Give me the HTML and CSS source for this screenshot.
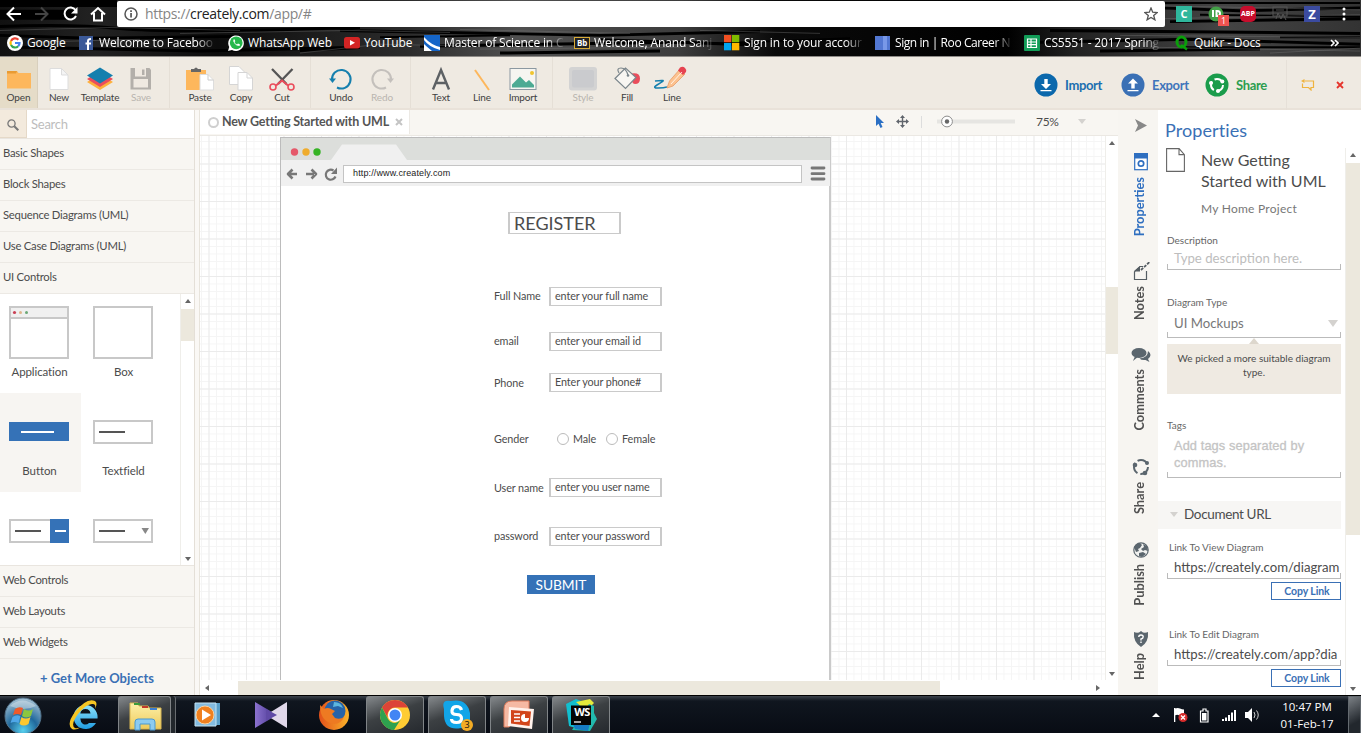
FILE: index.html
```html
<!DOCTYPE html>
<html lang="en">
<head>
<meta charset="utf-8">
<title>Creately</title>
<link rel="stylesheet" href="styles.css">
</head>
<body>
<div class="screen">
  <header class="chrome">
    <svg class="texture" width="1361" height="57" viewBox="0 0 1361 57" preserveAspectRatio="none">
      <defs>
        <linearGradient id="tx"><stop offset="0" stop-color="#111"/><stop offset=".07" stop-color="#222"/><stop offset=".16" stop-color="#0c0c0c"/><stop offset=".3" stop-color="#2c2c2c"/><stop offset=".38" stop-color="#505050"/><stop offset=".5" stop-color="#3c3c3c"/><stop offset=".57" stop-color="#0a0a0a"/><stop offset=".74" stop-color="#000"/><stop offset=".79" stop-color="#222"/><stop offset=".9" stop-color="#444"/><stop offset="1" stop-color="#333"/></linearGradient>
      </defs>
      <rect width="1361" height="57" fill="url(#tx)"/>
      <g fill="none" stroke="#000">
        <path stroke-width="10" d="M0 2H117M0 15h75"/>
        <path stroke-width="3" d="M0 27q70-3 120 2t240-1M0 36l90 3 150-2M20 48l180 4 160-4M340 31l260 5 160-4M420 47l260-4 80 3M500 54l160-2M1160 8l80 3 120-3M1170 22l190-3M1050 31l310 3M1040 43l150-3 170 5M1100 52l160-2"/>
        <path stroke-width="2" d="M600 40l120 4 130-5M300 52l60-3M1200 15l160 2M1160 3h200M1280 38h80M1180 48h180M380 38l130-2"/>
      </g>
      <g fill="none" stroke="#777" opacity=".4">
        <path d="M0 31l110-3 130 3M30 43l110-3M180 34l170-3 100 2M300 54l80-9 90 2M460 30l170 4M480 50l200-2M700 31l120 3M1165 6l195 4M1165 19l195-4M1120 36l240 2M1150 48l210 4M1270 54l90-5"/>
      </g>
    </svg>
    <div class="addressbar">
      <div class="nav">
        <svg width="117" height="28" viewBox="0 0 117 28" fill="none" stroke-width="2">
          <path stroke="#fff" d="M21 14H8M14 7.500L7.500 14l6.500 6.500"/>
          <path stroke="#444" d="M35 14h12M41 7.500l6.500 6.500-6.500 6.500"/>
          <path stroke="#fff" d="M75.500 10a6 6 0 1 0 .5 6"/><path fill="#fff" d="M71 13.500h6.500V7z"/>
          <path stroke="#fff" d="M91 14.500l7-6.500 7 6.500M94 13v7.500h8V13"/>
        </svg>
      </div>
      <div class="omnibox">
        <svg width="14" height="14" viewBox="0 0 14 14"><circle cx="7" cy="7" r="6" fill="none" stroke="#555" stroke-width="1.500"/><path d="M6.200 6h1.700v4.500H6.200zM6.200 3.300h1.700v1.600H6.200z" fill="#555"/></svg>
        <span class="url">https://<b>creately.com</b>/app/#</span>
        <svg class="star" width="14" height="14" viewBox="0 0 14 14"><path d="M7 1l1.700 4.200 4.500.3-3.500 2.900 1.200 4.400L7 10.400l-3.900 2.400 1.200-4.400L.8 5.500l4.500-.3z" fill="none" stroke="#555" stroke-width="1.300"/></svg>
      </div>
      <div class="exts">
        <span class="ext ext-c">C</span>
        <span class="ext ext-d"><svg width="16" height="16" viewBox="0 0 16 16"><circle cx="8" cy="8" r="7.500" fill="#43a047"/><path d="M5 4v7M8.500 5v5h1a2.500 2.500 0 0 0 0-5z" stroke="#fff" stroke-width="2" fill="none"/></svg><i class="badge">1</i></span>
        <span class="ext ext-abp">ABP</span>
        <svg width="18" height="16" viewBox="0 0 18 16" fill="none" stroke="#555"><rect x="1" y="1" width="14" height="9"/><path d="M4 13l2-6 3 6 2-5 3 6M4 4h8"/></svg>
        <span class="ext ext-z">Z</span>
        <svg width="4" height="14" viewBox="0 0 4 14" fill="#fff"><circle cx="2" cy="2" r="1.500"/><circle cx="2" cy="7" r="1.500"/><circle cx="2" cy="12" r="1.500"/></svg>
      </div>
    </div>
    <nav class="bookmarks">
      <a class="bm w72"><svg width="16" height="16" viewBox="0 0 16 16"><circle cx="8" cy="8" r="8" fill="#fff"/><g fill="none" stroke-width="2.200"><path stroke="#ea4335" d="M4 6a4.600 4.600 0 0 1 7.400-1.300"/><path stroke="#fbbc05" d="M4 10a4.600 4.600 0 0 1 0-4"/><path stroke="#34a853" d="M11.200 11.300A4.600 4.600 0 0 1 4 10"/><path stroke="#4285f4" d="M8 8h4.500a4.600 4.600 0 0 1-1.300 3.300"/></g></svg><span>Google</span></a>
      <a class="bm w149"><svg width="16" height="16" viewBox="0 0 16 16"><rect x="0" y="1" width="14" height="14" fill="#3b5998"/><path d="M9 15V6q0-2 3-2M6.500 8.500H12" stroke="#fff" stroke-width="2" fill="none"/></svg><span class="fade">Welcome to Faceboo</span></a>
      <a class="bm w116"><svg width="16" height="16" viewBox="0 0 16 16"><path d="M0 16l1.200-4A7.800 7.800 0 1 1 4 14.900z" fill="#fff"/><circle cx="8.200" cy="7.800" r="6.400" fill="#25b84b"/><path d="M5.500 4.500q-1 1.500 1 4t5 2.500l.5-1.500-2-1-1 1q-2-1-2.500-2.500l.8-.8L6.500 4.300z" fill="#fff"/></svg><span>WhatsApp Web</span></a>
      <a class="bm w80"><svg width="16" height="16" viewBox="0 0 16 16"><rect x="0" y="2" width="16" height="11.500" rx="2.500" fill="#d32424"/><path d="M6 5l5 2.700-5 2.800z" fill="#fff"/></svg><span>YouTube</span></a>
      <a class="bm w150"><svg width="16" height="16" viewBox="0 0 16 16"><rect width="16" height="16" fill="#fff"/><path fill="#1565c8" d="M0 0h16v12Q7 10 0 2zM0 5q5 7 16 10v1H8Q3 12 0 9z"/></svg><span class="fade">Master of Science in C</span></a>
      <a class="bm w150"><i class="bb">Bb</i><span class="fade">Welcome, Anand Sanj</span></a>
      <a class="bm w151"><svg width="16" height="16" viewBox="0 0 16 16"><path fill="#f25022" d="M0 0h7.300v7.300H0z"/><path fill="#7fba00" d="M8 0h7.300v7.300H8z"/><path fill="#00a4ef" d="M0 8h7.300v7.300H0z"/><path fill="#ffb900" d="M8 8h7.300v7.300H8z"/></svg><span class="fade">Sign in to your accour</span></a>
      <a class="bm w149"><svg width="16" height="16" viewBox="0 0 16 16"><rect y="1" width="15" height="14" fill="#5277d2"/><path d="M8 1h4v14H8z" fill="#7898e8"/></svg><span class="fade tight">Sign in | Roo Career N</span></a>
      <a class="bm w150"><svg width="16" height="16" viewBox="0 0 16 16"><rect width="16" height="16" rx="1" fill="#129d58"/><path d="M3.500 4h9v8.500h-9zM3.500 7h9M3.500 9.700h9M7 4v8.500" fill="none" stroke="#fff" stroke-width="1.200"/></svg><span class="fade">CS5551 - 2017 Spring</span></a>
      <a class="bm w150"><svg width="16" height="16" viewBox="0 0 16 16" fill="none" stroke="#0a9e0a"><ellipse cx="7.500" cy="7" rx="4.500" ry="5" stroke-width="3"/><path d="M7 10l6 4.500" stroke-width="2.500"/></svg><span>Quikr - Docs</span></a>
      <svg class="more" width="9" height="8" viewBox="0 0 9 8" fill="none" stroke="#fff" stroke-width="1.600"><path d="M1 1l3 3-3 3M5 1l3 3-3 3"/></svg>
    </nav>
  </header>

  <div class="toolbar">
    <div class="tool open"><svg width="24" height="26" viewBox="0 0 24 26"><path d="M0 5h10l1.500 2H24v15.500H0z" fill="#fdb75c"/><path d="M0 5h10l-1 2.500H0z" fill="#e99b33"/></svg><span>Open</span></div>
    <div class="tool"><svg width="24" height="26" viewBox="0 0 24 26"><path d="M3 2.500h11.500l6.500 6.500v14.500H3z" fill="#fff" stroke="#ddd"/><path d="M14.500 2.500V9H21z" fill="#f4f4f4" stroke="#ddd"/></svg><span>New</span></div>
    <div class="tool"><svg width="26" height="26" viewBox="0 0 26 26"><path d="M0 16l13 8 13-8-13-8z" fill="#fdb13c"/><path d="M0 13l13 8 13-8-13-8z" fill="#ea4d5c"/><path d="M0 9.500l13 8 13-8L13 1.500z" fill="#147fae"/></svg><span>Template</span></div>
    <div class="tool off"><svg width="24" height="26" viewBox="0 0 24 26"><path d="M1.500 2h19L22 4v19.500H1.500z" fill="#b3afaa"/><path d="M6 2h11v8.500H6zM4.500 13h14.500v8.500H4.500z" fill="#efe9e1"/><path d="M13 3.500h2.500v5.500H13z" fill="#b3afaa"/></svg><span>Save</span></div>
    <i class="sep"></i>
    <div class="tool"><svg width="28" height="26" viewBox="0 0 28 26"><path d="M0 4h20v20H0z" fill="#fdb75c"/><path d="M5 6V3h3q2-3 4 0h3v3z" fill="#666"/><path d="M14 8.500h8l5.500 5.500v10H14z" fill="#fff" stroke="#ddd"/><path d="M22 8.500V14h5.500" fill="none" stroke="#ccc"/></svg><span>Paste</span></div>
    <div class="tool"><svg width="24" height="26" viewBox="0 0 24 26" fill="#fff" stroke="#d5d5d5"><path d="M.5.500H10l5 5v13H.5z"/><path d="M9 6.500h9l5.500 5.500v12H9z"/><path fill="none" d="M18 6.500V12h5.500"/></svg><span>Copy</span></div>
    <div class="tool"><svg width="26" height="26" viewBox="0 0 26 26" fill="none"><path d="M3 3l14.500 15M23.500 3L9 18" stroke="#555" stroke-width="2.300"/><path d="M7 19.500l6-5 6 5" stroke="#ea4d5c" stroke-width="2"/><circle cx="4" cy="21" r="3" stroke="#ea4d5c" stroke-width="1.600"/><circle cx="22" cy="21" r="3" stroke="#ea4d5c" stroke-width="1.600"/></svg><span>Cut</span></div>
    <i class="sep"></i>
    <div class="tool"><svg width="24" height="26" viewBox="0 0 24 26"><path d="M3 14a9.300 9.300 0 1 1 5 7.500" fill="none" stroke="#147fae" stroke-width="2"/><path d="M0 12.500h7L3.500 17z" fill="#147fae"/></svg><span>Undo</span></div>
    <div class="tool off"><svg width="24" height="26" viewBox="0 0 24 26"><path d="M21 14a9.300 9.300 0 1 0-5 7.500" fill="none" stroke="#c4c0bc" stroke-width="2"/><path d="M24 12.500h-7l3.500 4.500z" fill="#c4c0bc"/></svg><span>Redo</span></div>
    <i class="sep"></i>
    <div class="tool"><svg width="20" height="26" viewBox="0 0 20 26"><path d="M2 23.500L10 4l8 19.500M5 17h10" fill="none" stroke="#5d6164" stroke-width="2.400"/></svg><span>Text</span></div>
    <div class="tool"><svg width="24" height="26" viewBox="0 0 24 26"><path d="M5 4l14 20" stroke="#fdb75c" stroke-width="2"/></svg><span>Line</span></div>
    <div class="tool"><svg width="28" height="26" viewBox="0 0 28 26"><rect x="1" y="2.500" width="26" height="21" fill="#f6f5f1" stroke="#8b98a1"/><path d="M3 21.500v-3l8-8 6 6 3-2.500 5 5v2.500z" fill="#4caa93"/><circle cx="23" cy="7" r="2" fill="#f0c52e"/></svg><span>Import</span></div>
    <i class="sep wide"></i>
    <div class="tool off"><svg width="28" height="26" viewBox="0 0 28 26"><rect x="0" y="1" width="28" height="23.500" rx="3" fill="#d3d3d3"/><rect x="3" y="4" width="22" height="17.500" rx="2" fill="#cacbce"/></svg><span>Style</span></div>
    <div class="tool w45"><svg width="28" height="26" viewBox="0 0 28 26"><path d="M19 7.500q8-1 8 5 0 5.500-5 5.500-4-1-2-4z" fill="#ea4d5c"/><path d="M2 12.500L12.500 2 23 11.500 12.500 22.500z" fill="#f8f6f2" stroke="#7b868c" stroke-width="1.200"/><path d="M6 7q-3-5 2-5t7 7" fill="none" stroke="#7b868c" stroke-width="1.200"/><circle cx="15" cy="9.500" r="1.300" fill="#7b868c"/></svg><span>Fill</span></div>
    <div class="tool w45 pen"><svg width="34" height="26" viewBox="0 0 34 26"><path d="M1 15q9-1 8 0t-6 4 1 3 9-1" fill="none" stroke="#147fae" stroke-width="1.700"/><path d="M13 22l2.500-7L26 3l5 5-12 12z" fill="#fcc28f" stroke="#e79b67" stroke-width=".8"/><path d="M24 4.500l2-3q3-1.500 5 .5t1 4l-3 3z" fill="#e64350"/><path d="M17 18L28 6" stroke="#fff" stroke-width=".8"/></svg><span>Line</span></div>
    <div class="actions">
      <div class="action imp"><svg width="24" height="24" viewBox="0 0 24 24"><circle cx="12" cy="12" r="11.500" fill="#0b68ac"/><path d="M10.300 6h3.400v5h3.300l-5 5-5-5h3.300zM6.500 17h11v1.300h-11z" fill="#fff"/></svg><span>Import</span></div>
      <div class="action exp"><svg width="24" height="24" viewBox="0 0 24 24"><circle cx="12" cy="12" r="11.500" fill="#3a70b5"/><path d="M10.300 15.500h3.400v-5H17l-5-5-5 5h3.300zM6.500 17h11v1.300h-11z" fill="#fff"/></svg><span>Export</span></div>
      <div class="action shr"><svg width="24" height="24" viewBox="0 0 24 24"><circle cx="12" cy="12" r="11.500" fill="#1a9c4b"/><circle cx="12" cy="12" r="6" fill="none" stroke="#fff" stroke-width="2" stroke-dasharray="9.500 3"/><circle cx="17.300" cy="8.500" r="2" fill="#fff"/><circle cx="6" cy="10" r="2" fill="#fff"/><circle cx="13" cy="18" r="2" fill="#fff"/></svg><span>Share</span></div>
      <svg class="chat" width="14" height="12" viewBox="0 0 14 12"><path d="M3.500 2h9v6.500H10v2.500L7.500 8.500h-6V4.500" fill="none" stroke="#efb33e" stroke-width="1.200"/><path d="M0 2l3.500-2v4z" fill="#efb33e"/></svg>
      <svg class="x" width="8" height="8" viewBox="0 0 8 8"><path d="M1 1l6 6M7 1L1 7" stroke="#e5342c" stroke-width="1.800"/></svg>
    </div>
  </div>

  <main class="work">
    <aside class="left">
      <div class="search"><i><svg width="12" height="12" viewBox="0 0 12 12" fill="none" stroke="#777"><circle cx="4.500" cy="4.500" r="3.600" stroke-width="1.300"/><path d="M7.300 7.300l4 4" stroke-width="2"/></svg></i><span>Search</span></div>
      <div class="cat">Basic Shapes</div>
      <div class="cat">Block Shapes</div>
      <div class="cat">Sequence Diagrams (UML)</div>
      <div class="cat">Use Case Diagrams (UML)</div>
      <div class="cat">UI Controls</div>
      <div class="shapes">
        <div class="grid">
          <div class="cell"><svg width="60" height="53" viewBox="0 0 60 53"><rect x="1" y="1" width="58" height="51" fill="#fff" stroke="#c8c8c8" stroke-width="2"/><path d="M2 2h56v9H2z" fill="#f0f0f0"/><path d="M1 12h58" stroke="#c8c8c8" stroke-width="2"/><circle cx="5.500" cy="6.500" r="1.600" fill="#c94055"/><circle cx="11.500" cy="6.500" r="1.500" fill="#deb58a"/><circle cx="17.500" cy="6.500" r="1.500" fill="#6ba876"/></svg><span>Application</span></div>
          <div class="cell"><svg width="60" height="53" viewBox="0 0 60 53"><rect x="1" y="1" width="58" height="51" fill="#fff" stroke="#c8c8c8" stroke-width="2"/></svg><span>Box</span></div>
          <div class="cell hot"><svg width="60" height="53" viewBox="0 0 60 53"><path d="M0 17h60v19H0z" fill="#3572b7"/><path d="M12 27h33" stroke="#fff" stroke-width="2"/></svg><span>Button</span></div>
          <div class="cell"><svg width="60" height="53" viewBox="0 0 60 53"><rect x="1" y="16" width="58" height="22" fill="#fff" stroke="#c8c8c8" stroke-width="2"/><path d="M6 27h26" stroke="#555" stroke-width="2"/></svg><span>Textfield</span></div>
          <div class="cell"><svg width="60" height="53" viewBox="0 0 60 53"><rect x="1" y="16" width="58" height="22" fill="#fff" stroke="#c8c8c8" stroke-width="2"/><path d="M6 27h26" stroke="#555" stroke-width="2"/><path d="M41 15h19v24H41z" fill="#3572b7"/><path d="M46 27h11" stroke="#fff" stroke-width="2"/></svg></div>
          <div class="cell"><svg width="60" height="53" viewBox="0 0 60 53"><rect x="1" y="16" width="58" height="22" fill="#fff" stroke="#c8c8c8" stroke-width="2"/><path d="M6 27h26" stroke="#555" stroke-width="2"/><path d="M48.500 24h7.500l-3.700 6z" fill="#888"/></svg></div>
        </div>
        <div class="vbar"><i class="up"></i><b></b><i class="down"></i></div>
      </div>
      <div class="cat">Web Controls</div>
      <div class="cat">Web Layouts</div>
      <div class="cat">Web Widgets</div>
      <div class="getmore">+ Get More Objects</div>
    </aside>

    <section class="center">
      <div class="tabbar">
        <div class="doc"><i class="ring"></i><span>New Getting Started with UML</span><svg width="8" height="8" viewBox="0 0 8 8"><path d="M1 1l6 6M7 1L1 7" stroke="#c4c4c4" stroke-width="2"/></svg></div>
        <div class="zoombar">
          <svg width="8" height="13" viewBox="0 0 8 13"><path d="M0 0v11l2.500-2.300L4.500 13l2-1-1.800-4H8z" fill="#2a6fc4"/></svg>
          <svg width="13" height="13" viewBox="0 0 13 13"><path d="M6.500 2v9M2 6.500h9" stroke="#60656c" stroke-width="1.400"/><path d="M6.500 0L9 3H4zM6.500 13L9 10H4zM0 6.500L3 4v5zM13 6.500L10 4v5z" fill="#60656c"/></svg>
          <i class="vline"></i>
          <svg class="slider" width="78" height="13" viewBox="0 0 78 13"><path d="M0 6.500h78" stroke="#e6e5e2" stroke-width="4"/><circle cx="10" cy="6.500" r="5.400" fill="#fff" stroke="#8d8d8d"/><circle cx="10" cy="6.500" r="2.200" fill="#666"/></svg>
          <span class="pct">75%</span>
          <i class="caret"></i>
        </div>
      </div>
      <div class="stage">
        <div class="canvas">
          <div class="mock">
            <svg class="mocktop" width="549" height="48" viewBox="0 0 549 48"><path fill="#dcdedb" d="M0 0h549v22H0z"/><path fill="#f0f0f0" d="M0 22h50L61 6.500h54L126 22h423v26H0z"/><circle cx="13.500" cy="14" r="3.700" fill="#e5596a"/><circle cx="25" cy="14" r="3.700" fill="#efac2d"/><circle cx="36" cy="14" r="3.700" fill="#35b324"/>
              <g fill="none" stroke="#777" stroke-width="2.600" stroke-linejoin="round"><path d="M16 36H8M11.500 31.500L7 36l4.500 4.500M25 36h8M30.500 31.500L35 36l-4.500 4.500"/><path d="M52.500 32.500a5 5 0 1 0 2 6" stroke-width="2.200"/></g><path d="M56 29.500v6.500h-6z" fill="#777"/>
              <rect x="62.500" y="27.500" width="458" height="17" fill="#fff" stroke="#c4c4c4"/><path d="M531 30h12M531 35.700h12M531 41h12" stroke="#777" stroke-width="2.800" stroke-linecap="round"/></svg>
            <span class="mockurl">http://www.creately.com</span>
            <div class="obj box title" style="left:227px;top:74px">REGISTER</div>
            <div class="obj label" style="left:213px;top:149px">Full Name</div>
            <div class="obj box" style="left:268px;top:149px">enter your full name</div>
            <div class="obj label" style="left:213px;top:194px">email</div>
            <div class="obj box" style="left:268px;top:194px">enter your email id</div>
            <div class="obj label" style="left:213px;top:236px">Phone</div>
            <div class="obj box" style="left:268px;top:235px">Enter your phone#</div>
            <div class="obj label" style="left:213px;top:292px">Gender</div>
            <div class="obj label" style="left:276px;top:292px"><i class="radio"></i>Male</div>
            <div class="obj label" style="left:325px;top:292px"><i class="radio"></i>Female</div>
            <div class="obj label" style="left:213px;top:341px">User name</div>
            <div class="obj box" style="left:268px;top:340px">enter you user name</div>
            <div class="obj label" style="left:213px;top:389px">password</div>
            <div class="obj box" style="left:268px;top:389px">enter your password</div>
            <div class="obj submit" style="left:246px;top:437px">SUBMIT</div>
          </div>
        </div>
        <div class="vbar tall"><i class="up"></i><b></b><i class="down"></i></div>
      </div>
      <div class="hbar"><i class="lft"></i><b></b><i class="rgt"></i></div>
    </section>

    <nav class="tabs">
      <svg class="collapse" width="12" height="13" viewBox="0 0 12 13"><path d="M0 0l12 6.500L0 13l3-6.500z" fill="#888"/></svg>
      <div class="tab t1"><svg width="14" height="18" viewBox="0 0 14 18"><rect x=".7" y=".7" width="12.600" height="16" fill="#fff" stroke="#2f6fc0" stroke-width="1.200"/><path d="M0 0h14v5.500H0z" fill="#2f6fc0"/><circle cx="7" cy="10.500" r="2.700" fill="none" stroke="#2f6fc0" stroke-width="1.700"/></svg><span>Properties</span></div>
      <div class="tab t2"><svg width="18" height="18" viewBox="0 0 18 18"><path d="M2.500 9.500v8h12V9M11 4.500H8L2.500 9.500" fill="none" stroke="#555d63" stroke-width="1.200"/><path d="M2 9.500L8 4v5.500z" fill="#555d63"/><path d="M9 8l8.500-8" stroke="#555d63" stroke-width="1.800" stroke-dasharray="3 1.200"/></svg><span>Notes</span></div>
      <div class="tab t3"><svg width="20" height="16" viewBox="0 0 20 16" fill="#5b666e"><ellipse cx="8" cy="6" rx="7.500" ry="5"/><path d="M2 14l2-5h4z"/><path d="M17 4q5 4 0 8l1.500 3-4-2q-4 .5-6-1.500Q17 11 17 4z"/></svg><span>Comments</span></div>
      <div class="tab t4"><svg width="18" height="18" viewBox="0 0 18 18"><circle cx="9" cy="9" r="7" fill="none" stroke="#5b666e" stroke-width="2" stroke-dasharray="11.600 3"/><circle cx="3" cy="7" r="2.300" fill="#5b666e"/><circle cx="15" cy="5" r="2" fill="#5b666e"/><circle cx="13" cy="15" r="2.300" fill="#5b666e"/></svg><span>Share</span></div>
      <div class="tab t5"><svg width="16" height="16" viewBox="0 0 16 16"><circle cx="8" cy="8" r="7.200" fill="#f1f1ef" stroke="#5b666e" stroke-width="1.200"/><path d="M1 5q3-4 6-4l2 2-2 3-2 1 1 2-3 1zM10 2l4 2 1 5-3-1-2 1-2-2 3-2zM6 11l4-1 3 2-4 3-3-1z" fill="#5b666e"/></svg><span>Publish</span></div>
      <div class="tab t6"><svg width="16" height="16" viewBox="0 0 16 16"><path d="M8 0l2 1.500q3 .5 5-.5Q16 11 8 16 0 11 1 1q2 1 5 .5z" fill="#5b666e"/><path d="M5.800 6q0-2 2.200-2t2.200 1.800T8 8v1.500M8 10.500V12" fill="none" stroke="#fff" stroke-width="1.400"/></svg><span>Help</span></div>
    </nav>

    <aside class="props">
      <h1>Properties</h1>
      <div class="pbody">
        <div class="pcontent">
          <div class="dochead"><svg width="20" height="25" viewBox="0 0 20 25"><path d="M1.600.6h12.500l5.300 6v16.800H1.600zM14 .6v6h5.400" fill="#fff" stroke="#666" stroke-width="1.100"/></svg><div><h2>New Getting Started with UML</h2><p>My Home Project</p></div></div>
          <div class="flabel l1">Description</div>
          <div class="field ph f1">Type description here.</div>
          <div class="flabel l2">Diagram Type</div>
          <div class="field sel">UI Mockups<i class="caret big"></i></div>
          <div class="hint">We picked a more suitable diagram type.</div>
          <div class="flabel l3">Tags</div>
          <div class="field tags">Add tags separated by commas.</div>
          <div class="sect"><i class="caret"></i>Document URL</div>
          <div class="flabel l4">Link To View Diagram</div>
          <div class="field link"><span>https://creately.com/diagram</span></div>
          <div class="copy">Copy Link</div>
          <div class="flabel l5">Link To Edit Diagram</div>
          <div class="field link"><span>https://creately.com/app?dia</span></div>
          <div class="copy">Copy Link</div>
        </div>
        <div class="vbar right"><i class="up"></i><b></b><i class="down"></i></div>
      </div>
    </aside>
  </main>

  <footer class="taskbar">
    <svg width="0" height="0" class="defs"><defs>
      <radialGradient id="orb" cx=".5" cy=".9" r=".9"><stop offset="0" stop-color="#58d0ee"/><stop offset=".45" stop-color="#20699c"/><stop offset="1" stop-color="#a9c4d6"/></radialGradient>
      <linearGradient id="ie" x2="0" y2="1"><stop offset="0" stop-color="#8fe3fb"/><stop offset="1" stop-color="#1f9be0"/></linearGradient>
      <linearGradient id="fold" x2="0" y2="1"><stop offset="0" stop-color="#fdf0a9"/><stop offset="1" stop-color="#eecb5c"/></linearGradient>
      <linearGradient id="ff" x2="1"><stop offset="0" stop-color="#e2501a"/><stop offset="1" stop-color="#fbb32a"/></linearGradient>
      <linearGradient id="vs"><stop offset="0" stop-color="#8b72cf"/><stop offset="1" stop-color="#42308c"/></linearGradient>
    </defs></svg>
    <div class="task orb"><svg width="40" height="38" viewBox="0 0 40 38"><circle cx="19" cy="20" r="18" fill="url(#orb)" stroke="#54748c"/><path d="M6 10Q18-1 32 10q-12 6-26 0z" fill="#fff" opacity=".35"/><path d="M11 13q4-3 8-1l-2 7q-4-2-8 0z" fill="#ef5a29"/><path d="M20 13q5 3 9 0l-2 7q-5 3-9 0z" fill="#8cc63f"/><path d="M8.500 21q4-3 8-1l-2 7q-4-2-8 0z" fill="#4fa7e8"/><path d="M17.500 21q4 3 9 0l-2 7q-5 3-9 0z" fill="#fdc82f"/></svg></div>
    <div class="task ie"><svg width="32" height="34" viewBox="0 0 32 34"><path d="M29.500 20.500A12 12 0 1 0 28 25h-7q-2.500 2.500-6 1-2.500-1.500-2.700-5.500zM12.300 15.500q.7-4.500 5.200-4.500t5 4.500z" fill="url(#ie)"/><path d="M4 31Q-2 26 7 14 19-1 27 3q3 2 0 8 1-5-2-5Q19 5 10 16 2 27 7 30q3 1 7-2-6 5-10 3z" fill="#f6c623"/></svg></div>
    <div class="task run fold"><svg width="34" height="32" viewBox="0 0 34 32"><path d="M2 4h8l1 3h9l1 2h12v21H2z" fill="url(#fold)" stroke="#d7b653"/><path d="M6 4h6v2H6z" fill="#3c9b3c"/><path d="M14 7h6v2h-6z" fill="#c43b2b"/><path d="M22 9h7v2h-7z" fill="#3d7fd0"/><path d="M7 31v-8q0-3 3-3h14q3 0 3 3v8h-5v-6H12v6z" fill="#8ccbf0" stroke="#4a98cf"/></svg></div>
    <div class="task wmp"><svg width="28" height="28" viewBox="0 0 28 28"><path d="M8 2h18v22H8z" fill="#5a9fc9"/><path d="M1 2h21v23H1z" fill="#83bbe0" stroke="#c6e4f4"/><circle cx="11" cy="14" r="9" fill="#f0801f" stroke="#fbd2a0"/><path d="M8 8.500l9 5.500-9 5.500z" fill="#fff"/></svg></div>
    <div class="task vs"><svg width="34" height="28" viewBox="0 0 34 28"><path d="M1 1l22 13L1 27z" fill="url(#vs)"/><path d="M33 1L12 14l21 13z" fill="#e0d8ea"/><path d="M12 8l11 6-11 6z" fill="#604aa6"/></svg></div>
    <div class="task fx"><svg width="32" height="32" viewBox="0 0 32 32"><circle cx="16" cy="16" r="15" fill="url(#ff)"/><circle cx="17" cy="12" r="10.500" fill="#2763a8"/><path d="M16 3q7 0 9 6l-5-2-5 1z" fill="#5db6de"/><path d="M2 6l4 4q4-2 7 0l4 2-3 3 3 4q5 2 9-1-3 7-10 7Q2 23 2 6z" fill="#ee7a22"/></svg></div>
    <div class="task run"><svg width="32" height="32" viewBox="0 0 32 32"><circle cx="16" cy="16" r="15" fill="#fc3"/><path d="M3 8.500A15 15 0 0 1 29 8.500H16a8 8 0 0 0-7 11z" fill="#dc4437"/><path d="M3 8.500A15 15 0 0 0 15 31l7-11q-3 4-7 4-4-.5-6-4z" fill="#2ea14f"/><circle cx="16" cy="16" r="7" fill="#fff"/><circle cx="16" cy="16" r="5.500" fill="#4285f4"/></svg></div>
    <div class="task run"><svg width="32" height="32" viewBox="0 0 32 32"><path d="M3 10Q0 0 10 2q16-3 19 12 0 4 0 12-3 6-9 3Q4 32 3 17z" fill="#12a5e8"/><path d="M20.500 11q-1-3.500-5-3.500T11 11.500t4.500 4 5 4-5 4-5-3.500" fill="none" stroke="#fff" stroke-width="3.200"/></svg><i class="count">3</i></div>
    <div class="task run"><svg width="34" height="32" viewBox="0 0 34 32"><path d="M2 28V10q0-8 8-8h17v8L7 28z" fill="#f5b9a3" stroke="#db7a5a"/><path d="M7 8l25 2-2 20-24-3z" fill="#fff2ec"/><path d="M9 11l20 1.500L27.500 27 9 24.500z" fill="#d2451a"/><path d="M12 15h6M12 18.500h6M12 22h6" stroke="#fff" stroke-width="1.700"/><circle cx="23" cy="19" r="4" fill="#fff"/><path d="M23 19v-5h5v5z" fill="#d2451a"/></svg></div>
    <div class="task run"><svg width="34" height="34" viewBox="0 0 34 34"><path d="M2 6l10-5 8 3-2 28-13-4z" fill="#11bfcf"/><path d="M12 4l14-3 4 4-8 8z" fill="#e6ea3b"/><path d="M25 6l5 2v7l3 6-7 12-18-1z" fill="#22b9ad"/><path d="M9 26l17-1-2 8-13-2z" fill="#167cc3"/><rect x="7" y="7.500" width="20" height="19.500" fill="#050505"/><path d="M10 24h7" stroke="#fff" stroke-width="1.300"/></svg><i class="ws">WS</i></div>
    <div class="tray">
      <svg width="110" height="18" viewBox="0 0 110 18" fill="#fff"><path d="M0 11l4-4 4 4z"/><path d="M22 2h1.300v14H22zM23 2.500q3-1 5 0t4 1v6q-3 1-5-.2t-4 .2z"/><circle cx="31" cy="11.500" r="4.500" fill="#d52b2b"/><path d="M29 9.500l4 4M33 9.500l-4 4" stroke="#fff" stroke-width="1.300"/><path d="M51 3h3v2h2v11h-7.500V5H51z" fill="none" stroke="#fff" stroke-width="1.200"/><path d="M50 7h4.500v7.500H50z"/><path d="M70 13h2v2h-2zM73 11.500h2V15h-2zM76 9h2v6h-2zM79 6.500h2V15h-2zM82 4h2v11h-2zM93 6h3l4-4v14l-4-4h-3z"/><path d="M102 6q2 3 0 6M104.500 4.500q3.500 4.500 0 9" fill="none" stroke="#ccc"/></svg>
      <div class="clock"><span>10:47 PM</span><span>01-Feb-17</span></div>
      <i class="peek"></i>
    </div>
  </footer>
</div>
</body>
</html>
```
FILE: styles.css
```css
* { box-sizing: border-box; }
body { margin: 0; font-family: Lato, "Liberation Sans", sans-serif; color: #4c4c4c; }
i { font-style: normal; }
h1, h2, p { margin: 0; font-weight: 400; }
svg { display: block; flex: none; }
.screen { width: 1361px; height: 733px; overflow: hidden; display: flex; flex-direction: column; background: #fff; white-space: nowrap; }

/* browser chrome */
.chrome { position: relative; height: 57px; flex: none; background: #111; font-family: "Open Sans", "Noto Sans", sans-serif; border-bottom: 1px solid #8e8b87; }
.texture { position: absolute; left: 0; top: 0; height: 56px; }
.addressbar { position: relative; height: 28px; display: flex; }
.nav { width: 117px; }
.omnibox { margin-top: 1px; width: 1048px; height: 26px; background: #fff; border-radius: 2px; display: flex; align-items: center; padding: 0 7px; }
.url { margin-left: 7px; font-size: 14px; letter-spacing: -.34px; color: #858585; line-height: 26px; }
.url b { font-weight: 400; color: #222; }
.star { margin-left: auto; }
.exts { display: flex; align-items: center; margin-left: 11px; gap: 16px; }
.ext { width: 16px; height: 16px; color: #fff; font-weight: 700; font-size: 11px; line-height: 16px; text-align: center; position: relative; }
.ext-c { background: #2fb79c; }
.ext-z { background: #3b4ba0; font-size: 13px; margin-left: -2px; }
.ext-abp { background: #c70d2c; border-radius: 5px; font-size: 7px; }
.badge { position: absolute; left: 10px; top: 9px; width: 11px; height: 11px; background: #ef5350; color: #fff; font-size: 9px; line-height: 11px; font-weight: 400; }
.exts > svg:last-child { margin-left: 6px; }
.bookmarks { position: relative; height: 29px; display: flex; align-items: center; padding-left: 7px; }
.bm { display: flex; align-items: center; gap: 4px; flex: none; font-size: 12px; letter-spacing: -.15px; color: #fff; }
.bm span { line-height: 18px; }
.fade { -webkit-mask-image: linear-gradient(90deg, #000 86%, rgba(0,0,0,.15)); mask-image: linear-gradient(90deg, #000 86%, rgba(0,0,0,.15)); }
.tight { letter-spacing: -.42px; }
.w72 { width: 72px; } .w80 { width: 80px; } .w116 { width: 116px; } .w149 { width: 149px; } .w150 { width: 150px; } .w151 { width: 151px; }
.bb { width: 16px; height: 12px; border: 1px solid #d8ab36; background: #222; font-size: 8px; font-weight: 700; line-height: 10px; text-align: center; }
.more { margin-left: 6px; }

/* application toolbar */
.toolbar { height: 53px; flex: none; display: flex; background: #efeae2; border-bottom: 2px solid #e9e2d9; }
.tool { width: 41px; display: flex; flex-direction: column; align-items: center; padding-top: 9px; font-size: 10px; letter-spacing: -.15px; color: #404040; position: relative; left: .5px; }
.tool span { line-height: 12px; margin-top: -1px; }
.open { width: 38px; left: 0; background: #e5dcc8; border-right: 1px solid #d8cfbd; }
.off { color: #b9b5af; }
.w45 { width: 45px; margin-left: 1px; }
.pen { margin-left: 0; }
.pen svg { transform: translateX(-1px); }
.sep { width: 18px; border-right: 1px solid #e5dfd6; transform: translateX(-9px); }
.sep.wide { width: 19px; }
.actions { margin-left: auto; display: flex; align-items: center; height: 56px; font-size: 13px; font-weight: 700; letter-spacing: -.35px; }
.action { display: flex; align-items: center; gap: 7px; width: 87px; }
.imp { color: #1b6fb0; } .exp { color: #3f75bb; width: 84px; } .shr { color: #2c9d4f; width: 82px; height: 50px; border-right: 1px solid #e6e0d8; }
.chat { margin-left: 14px; }
.x { margin: 0 17px 0 21px; }

.work { height: 585px; flex: none; display: flex; background: #fff; }

/* shape library */
.left { width: 200px; background: #f8f6f2; border-right: 1px solid #e8e4dc; box-shadow: inset -4px 0 #faf8f5, inset -5px 0 #e4dfd7; padding-right: 5px; font-size: 11.300px; letter-spacing: -.25px; display: flex; flex-direction: column; }
.search { height: 29px; display: flex; background: #fff; border-bottom: 1px solid #e9e5df; font-size: 13px; line-height: 28px; color: #bdbdbd; }
.search i { width: 27px; background: #f3eadd; border-right: 1px solid #e5d9c8; border-bottom: 1px solid #e5d9c8; padding: 9px 7px; margin-right: 4px; }
.cat { height: 31px; padding-left: 3px; line-height: 28px; border-bottom: 1px solid #ece9e4; }
.shapes { height: 272px; display: flex; background: #fff; border-bottom: 1px solid #e9e5df; overflow: hidden; }
.grid { width: 181px; display: grid; grid-template-columns: 81px 84px; grid-auto-rows: 99px; }
.cell { display: flex; flex-direction: column; align-items: center; padding: 12px 3px 0 0; }
.cell:nth-child(even) { padding-right: 0; }
.cell span { margin-top: 5px; line-height: 16px; font-size: 11.500px; letter-spacing: -.1px; margin-left: 1px; }
.hot { background: #f7f5f2; }
.getmore { height: 36px; color: #3a70b5; font-weight: 700; font-size: 13px; letter-spacing: 0; line-height: 38px; text-align: center; }

/* scroll bars */
.vbar { width: 14px; display: flex; flex-direction: column; align-items: center; border: 0 solid #efeeea; border-left-width: 1px; background: #fff; }
.vbar b { display: block; width: 14px; height: 32px; background: #ece8dd; }
.up, .down { border: 3px solid transparent; border-top: 0; border-bottom: 4px solid #666; margin: 5px 0 6px; }
.down { border-top: 4px solid #666; border-bottom: 0; margin: auto 0 4px; }

/* canvas */
.center { width: 918px; display: flex; flex-direction: column; }
.tabbar { height: 26px; background: #f8f6f2; display: flex; border-bottom: 1px solid #ebe8e3; }
.doc { width: 210px; background: #fff; border-right: 1px solid #ece9e4; display: flex; align-items: center; padding: 0 8px; font-size: 12.500px; letter-spacing: -.2px; font-weight: 700; color: #555; height: 24px; }
.doc span { line-height: 16px; margin-top: -1px; }
.doc svg { margin-left: auto; margin-right: -2px; }
.ring { width: 11px; height: 11px; border: 2px solid #cfcfcf; border-radius: 50%; margin-right: 3px; }
.zoombar { margin-left: 466px; display: flex; align-items: center; height: 23px; }
.zoombar > svg:nth-child(2) { margin-left: 12px; }
.vline { width: 1px; height: 12px; background: #ddd; margin: 0 15px 0 12px; }
.pct { font-size: 12px; letter-spacing: -.3px; margin-left: 21px; width: 42px; }
.caret { border: 4px solid transparent; border-top: 5px solid #d4d2cf; border-bottom: 0; }
.stage { height: 544px; display: flex; }
.canvas { width: 905px; position: relative; overflow: hidden; background-color: #fff;
  background-image: linear-gradient(#ebebeb 1px, transparent 1px), linear-gradient(90deg, #ebebeb 1px, transparent 1px), linear-gradient(#f5f5f5 1px, transparent 1px), linear-gradient(90deg, #f5f5f5 1px, transparent 1px);
  background-size: 37.500px 37.500px, 37.500px 37.500px, 7.500px 7.500px, 7.500px 7.500px; background-position: 0 27.500px, 8.500px 0, 0 5px, 1px 0; }
.tall { width: 13px; }
.tall b { margin-top: 136px; height: 67px; width: 13px; }
.mock { position: absolute; left: 80px; top: 1px; width: 551px; height: 560px; border: 1px solid #bcbcbc; border-right-width: 2px; border-right-color: #cacaca; background: #fff; }
.mockurl { position: absolute; left: 72px; top: 28px; width: 100px; font: 9px/14px "Liberation Sans", Arial, sans-serif; letter-spacing: .13px; color: #222; }
.obj { position: absolute; font-size: 10.800px; letter-spacing: -.1px; }
.label { line-height: 17px; display: flex; align-items: center; }
.box { width: 113px; height: 19px; border: 2px solid #cacaca; border-width: 1.500px 2px; line-height: 16px; padding-left: 4px; }
.title { width: 113px; height: 22px; font-size: 18px; line-height: 20px; letter-spacing: 0; }
.radio { width: 12px; height: 12px; border: 1.500px solid #bbb; border-radius: 50%; margin-right: 4px; }
.submit { width: 68px; height: 19px; background: #3572b7; color: #fff; font-size: 13.800px; line-height: 19px; text-align: center; }
.hbar { height: 15px; display: flex; align-items: center; background: #fff; padding: 0 18px 0 5px; }
.hbar b { height: 14px; width: 702px; background: #ece8dd; margin-left: 29px; }
.lft, .rgt { border: 3px solid transparent; border-left: 0; border-right: 4px solid #666; }
.rgt { border-right: 0; border-left: 4px solid #666; margin-left: auto; }

/* side tabs */
.tabs { width: 40px; background: #f7f5f1; display: flex; flex-direction: column; align-items: center; padding: 9px 0 0 5px; overflow: hidden; }
.tab { display: flex; flex-direction: column; align-items: center; flex: none; }
.tab span { writing-mode: vertical-rl; transform: rotate(180deg); font-size: 12.800px; font-weight: 700; line-height: 16px; margin: 6px 3px 0 0; color: #505050; }
.collapse { margin-bottom: 21px; }
.t1 { height: 109px; } .t1 span { color: #2f6fc0; }
.t2 { height: 85px; } .t3 { height: 111px; } .t4 { height: 84px; } .t5 { height: 89px; }

/* properties panel */
.props { width: 203px; background: #fff; padding-left: 7px; }
.props h1 { color: #3a70b5; font-size: 18px; letter-spacing: .1px; line-height: 40px; height: 38px; }
.pbody { display: flex; height: 547px; }
.pcontent { width: 176px; padding-left: 2px; }
.right { width: 14px; margin-left: 4px; }
.right b { height: 372px; }
.right .up { margin: 5px 0 6px; }
.dochead { display: flex; height: 84px; margin-left: -2px; }
.dochead div { margin-left: 16px; }
h2 { font-size: 16px; line-height: 21px; width: 140px; white-space: normal; margin-top: 1px; }
.dochead p { font-size: 12px; letter-spacing: .25px; color: #777; margin-top: 10px; line-height: 16px; }
.flabel { font-size: 10px; line-height: 14px; color: #666; }
.field { width: 174px; height: 22px; padding-left: 7px; font-size: 13.200px; line-height: 20px; position: relative; border-bottom: 1px solid #bbb; }
.field::before { content: ""; position: absolute; left: 0; right: 0; bottom: 0; height: 5px; border: solid #bbb; border-width: 0 1px; }
.f1 { color: #bdbdbd; height: 23px; line-height: 22px; }
.l1 { margin-top: 1px; }
.l2 { margin-top: 25px; }
.sel { height: 29px; line-height: 29px; color: #777; display: flex; align-items: center; justify-content: space-between; }
.big { border-width: 7px 5px 0; margin: 0 3px; }
.hint { position: relative; margin-top: 6px; height: 50px; background: #efeae2; font-size: 10px; line-height: 14px; padding: 7px 8px; text-align: center; white-space: normal; width: 174px; }
.hint::before { content: ""; position: absolute; left: 82px; top: -6px; border: 5px solid transparent; border-bottom: 6px solid #ddd7cd; border-top: 0; }
.l3 { margin-top: 24px; }
.tags { height: 46px; white-space: normal; font: 12.800px/17px "Liberation Sans", Arial, sans-serif; letter-spacing: .1px; color: #c4c4c4; -webkit-text-stroke: .3px #c4c4c4; padding-top: 5px; padding-right: 8px; }
.sect { margin: 23px 0 0 -9px; width: 183px; height: 28px; background: #f7f6f4; line-height: 28px; font-size: 13.500px; letter-spacing: -.35px; display: flex; align-items: center; padding: 0 0 2px 12px; }
.sect .caret { margin-right: 6px; }
.l4, .l5 { padding-left: 2px; margin-top: 11px; }
.link { height: 25px; line-height: 27px; }
.copy { width: 70px; height: 18px; border: 1px solid #3a70b5; color: #3a70b5; font-size: 10.500px; letter-spacing: -.1px; font-weight: 700; text-align: center; line-height: 16px; margin: 3px 0 0 104px; padding-left: 2px; }
.l5 { margin-top: 27px; }

/* desktop task bar */
.taskbar { height: 38px; flex: none; display: flex; background: linear-gradient(#3c434b 0, #10161f 5px, #080c14); border-top: 1px solid #000; }
.defs { position: absolute; }
.task { width: 58px; margin-right: 4px; display: flex; align-items: center; justify-content: center; position: relative; }
.orb { width: 47px; margin-right: 7px; justify-content: flex-start; padding-left: 4px; }
.run { background: linear-gradient(160deg, #84888b, #3c4043 45%, #25292e); border: 1px solid #808487; border-bottom: 0; border-radius: 3px 3px 0 0; }
.ie { width: 60px; }
.fold { width: 53px; margin-right: 5px; box-shadow: 4px 0 #22272c, 5px 0 #686c70; }
.wmp { width: 64px; margin-right: 0; } .vs { width: 62px; margin-right: 0; } .fx { width: 64px; margin-right: 0; }
.count { position: absolute; right: 12px; bottom: 2px; width: 12px; height: 12px; border-radius: 50%; background: #f3ac25; color: #111; font: 9px/12px "Open Sans", sans-serif; text-align: center; }
.ws { position: absolute; left: 18px; top: 7px; width: 22px; text-align: center; color: #fff; font: 700 11px/15px "Open Sans", sans-serif; letter-spacing: -.5px; }
.tray { margin-left: auto; display: flex; align-items: center; }
.tray > svg { margin-right: -6px; }
.clock { margin-left: 18px; width: 66px; display: flex; flex-direction: column; color: #fff; font: 11.500px/17px "Open Sans", sans-serif; text-align: center; }
.peek { width: 13px; height: 38px; margin-left: 8px; border: 1px solid #646a70; background: linear-gradient(150deg, #7b8085, #22272d 70%); }
```
